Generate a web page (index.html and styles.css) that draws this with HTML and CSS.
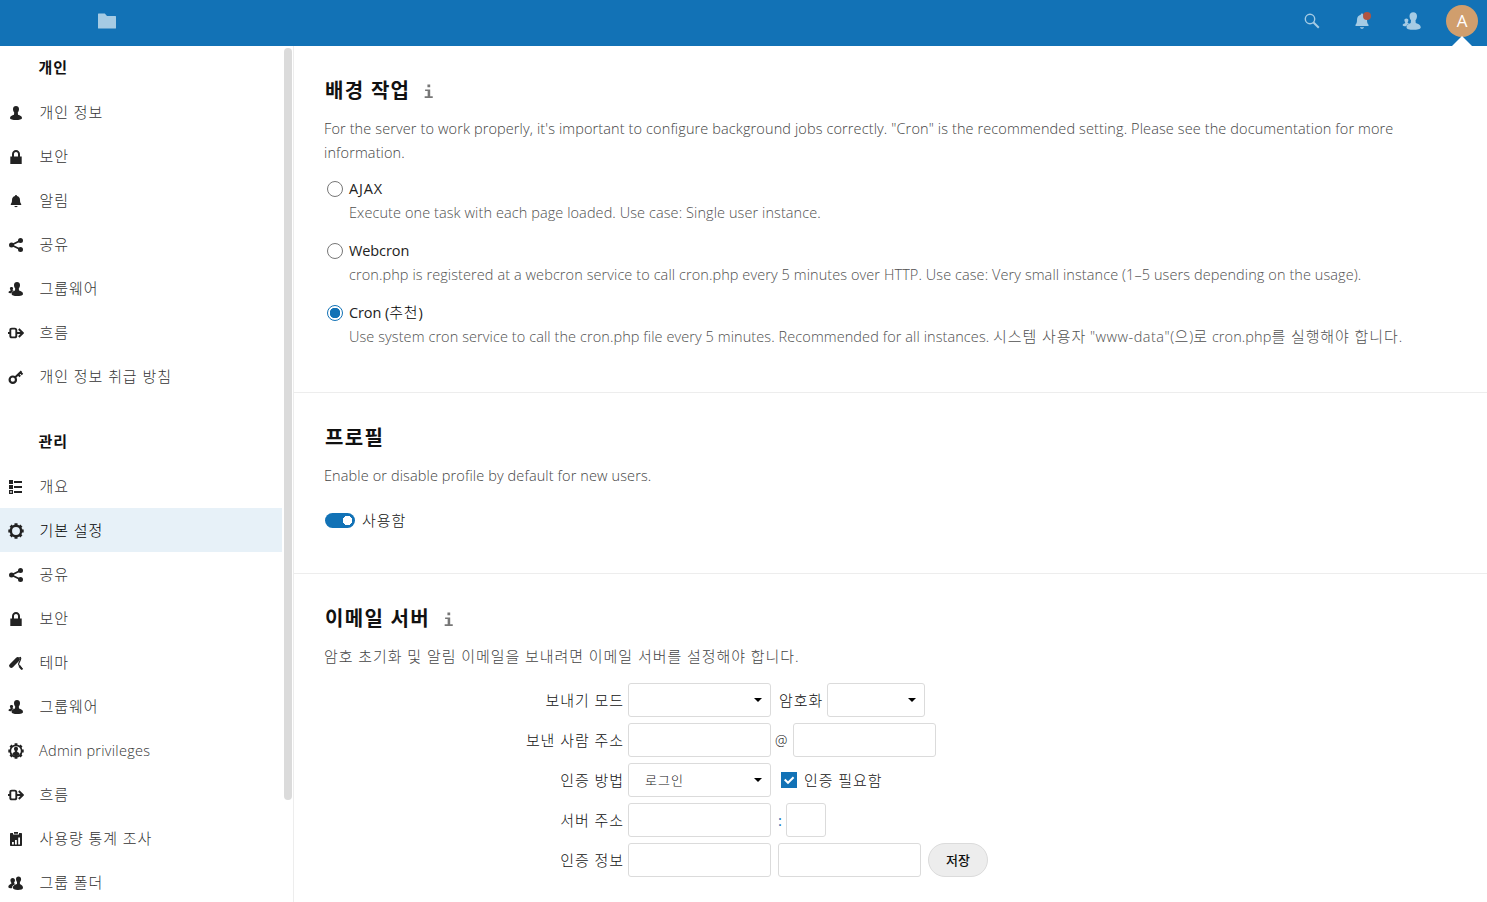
FILE: index.html
```html
<!DOCTYPE html>
<html lang="ko">
<head>
<meta charset="utf-8">
<title>기본 설정</title>
<link rel="stylesheet" href="styles.css">
</head>
<body>
<svg class="defs" width="0" height="0">
  <symbol id="user" viewBox="0 0 16 16"><path d="M8 1C6.200 1 5 2.200 5 4c0 1.500.5 2.700 1.200 3.500L6 9.800C4 10.500 2 11.200 2 13c0 1.500 3 2 6 2s6-.5 6-2c0-1.800-2-2.500-4-3.200L9.800 7.500C10.500 6.700 11 5.500 11 4c0-1.800-1.200-3-3-3z"/></symbol>
  <symbol id="lock" viewBox="0 0 16 16"><path d="M8 1C5.800 1 4 2.800 4 5v2.500H2.300V15h11.400V7.500H12V5c0-2.200-1.800-4-4-4zm0 2c1.100 0 2 .9 2 2v2.500H6V5c0-1.100.9-2 2-2z"/></symbol>
  <symbol id="bell" viewBox="0 0 16 16"><path d="M8 2C7.300 2 7 2.500 7 3 5 3.500 4 5 4 7c0 2.500-.5 3-1.200 4v1h10.400v-1C12.500 10 12 9.500 12 7c0-2-1-3.500-3-4 0-.5-.3-1-1-1zM6.300 13c.2.700.8 1.200 1.700 1.200s1.500-.5 1.700-1.200z"/></symbol>
  <symbol id="share" viewBox="0 0 16 16"><path d="M3.500 8 12.500 3.500M3.500 8l9 4.500" fill="none" stroke="currentColor" stroke-width="1.900"/><circle cx="3.500" cy="8" r="2.500"/><circle cx="12.500" cy="3.500" r="2.500"/><circle cx="12.500" cy="12.500" r="2.500"/></symbol>
  <symbol id="group" viewBox="0 0 16 16"><path d="M9 1C7.200 1 6 2.100 6 4c0 1.500.5 2.500 1.200 3.400L7 9.600C5.300 10.200 3.600 11 3.600 12.900c0 1.500 2.400 2.100 5.400 2.100s6-.5 6-2.100c0-1.800-2-2.700-4-3.300l-.2-2.200C11.500 6.500 12 5.500 12 4c0-1.900-1.200-3-3-3z"/><path d="M3.500 6C2.500 6 1.900 6.600 1.900 7.400c0 .6.200 1.100.6 1.500v.8C1.400 10 .5 10.300.5 11.200c0 .7.800.9 2.900 1 .6-1.400 1.200-1.900 2.400-2.500L4.500 9.300v-.4c.4-.4.600-.9.600-1.500C5.100 6.600 4.500 6 3.500 6z"/></symbol>
  <symbol id="groups" viewBox="0 0 16 16"><path d="M10.500 1.500C8.900 1.500 8 2.500 8 4.200c0 1.200.4 2.100 1 2.800v2C7 9.600 5 10.400 4.700 12.500c0 1.600 2.100 2.500 5.200 2.500s5.100-.8 5.100-2.200c0-1.500-1.400-2.900-3.100-3.700L11.900 7c.7-.8 1.200-1.600 1.200-2.800 0-1.700-1-2.700-2.600-2.700z"/><path d="M4.700 3C3.200 3 2.400 4 2.400 5.300c0 1 .4 1.800.9 2.400v1.100C1.800 9.400.3 10.200.3 11.900c0 .9 1.300 1.300 3.500 1.400.2-2.300 1.900-3.600 3.600-4.300L6.200 8.600l-.1-1c.5-.5.9-1.300.9-2.300C7 4 6.200 3 4.700 3z"/></symbol>
  <symbol id="flow" viewBox="0 0 16 16"><path d="M2.300 5.300c0-1.200.5-1.700 1.500-1.700h3c1 0 1.500.5 1.500 1.700v5.400c0 1.200-.5 1.700-1.500 1.700h-3c-1 0-1.500-.5-1.500-1.700zM0 8h2.300M8.300 8h6M10.800 4l4 4-4 4" fill="none" stroke="currentColor" stroke-width="1.900"/></symbol>
  <symbol id="key" viewBox="0 0 16 16"><g fill="none" stroke="currentColor"><circle cx="4.800" cy="10.700" r="3.200" stroke-width="2.200"/><path d="M7 8.500 13.500 2.300M10.200 5.500l2 2M12.500 3.500l2 2" stroke-width="2"/></g></symbol>
  <symbol id="list" viewBox="0 0 16 16"><path d="M1 1h4v4H1zM1 6h4v4H1zM6 2h8v2H6zM6 7h8v2H6zM6 12h8v2H6z"/><path d="M1.600 11.600h2.800v2.800H1.600z" fill="none" stroke="currentColor" stroke-width="1.200"/></symbol>
  <symbol id="gear" viewBox="0 0 16 16"><g fill="none" stroke="currentColor"><circle cx="8" cy="8" r="5.200" stroke-width="2.500"/><path d="M8 .3v2.200M8 13.500v2.200M.3 8h2.200M13.500 8h2.200M2.600 2.600l1.400 1.400M12 12l1.400 1.400M2.600 13.400 4 12M12 4l1.400-1.400" stroke-width="3"/></g></symbol>
  <symbol id="brush" viewBox="0 0 16 16"><path d="m3.300 10.700 6.400-6.400" fill="none" stroke="currentColor" stroke-width="4.400" stroke-linecap="round"/><path d="m10.500 3.200 2-.7c.5.700.4 1.300-.2 2.400L10.700 8.500c-.4.900 0 1.500.8 2.200l3 3.600" fill="none" stroke="currentColor" stroke-width="1.200"/><path d="m11.300 11 2.800 3.300" stroke="currentColor" stroke-width="2"/></symbol>
  <symbol id="admin" viewBox="0 0 16 16"><g fill="none" stroke="currentColor"><circle cx="8" cy="8" r="5.700" stroke-width="1.700"/><path d="M8 .3v2M8 13.700v2M.3 8h2M13.700 8h2M2.500 2.500l1.400 1.400M12.100 12.100l1.400 1.400M2.500 13.500l1.400-1.400M12.100 3.900l1.400-1.400" stroke-width="2.800"/></g><path d="M8 3.800c-1.300 0-2 .8-2 2 0 .9.300 1.500.8 2v1.300C5.500 9.600 4.500 10 4.500 11.200 5.500 12.500 6.500 13 8 13s2.500-.5 3.500-1.800c0-1.200-1-1.600-2.300-2.100V7.800c.5-.5.800-1.100.8-2 0-1.200-.7-2-2-2z"/></symbol>
  <symbol id="survey" viewBox="0 0 16 16"><path d="M3 2h2v1.500h6V2h2c.6 0 1 .4 1 1v11c0 .6-.4 1-1 1H3c-.6 0-1-.4-1-1V3c0-.6.400-1 1-1zM6 1h4v1.700H6z"/><path d="M4 11h1.800v2.500H4zM7 9h1.800v4.500H7zM10.200 6.500H12v7h-1.800z" fill="#fff"/></symbol>
  <symbol id="info" viewBox="0 0 16 16"><path d="M7 1.500h2.600v2.400H7zM4.800 6h4.800v6.500h2.400v1.600H4.400v-1.600h2.800V7.600H4.800z"/></symbol>
  <symbol id="folder" viewBox="0 0 20 20"><path d="M1.500 2.500C1.200 2.500 1 2.800 1 3.100v13.800c0 .4.200.6.600.6h16.800c.4 0 .6-.2.600-.6V5.600c0-.4-.2-.6-.6-.6H10L7.800 2.500z"/></symbol>
  <symbol id="search" viewBox="0 0 16 16"><g fill="none" stroke="currentColor"><circle cx="6" cy="6" r="4.700" stroke-width="1.400"/><path d="m9.300 9.300 5.500 5.500" stroke-width="2"/></g></symbol>
</svg>
<header class="topbar">
  <svg class="folder"><use href="#folder"/></svg>
  <div class="tools">
    <svg class="tool search"><use href="#search"/></svg>
    <div class="notify"><svg class="tool big"><use href="#bell"/></svg><i class="dot"></i></div>
    <svg class="tool contacts"><use href="#group"/></svg>
    <div class="avatar">A</div>
  </div>
</header>
<div class="layout">
  <nav class="sidebar">
    <div class="menu">
      <div class="caption">개인</div>
      <a class="item"><svg><use href="#user"/></svg>개인 정보</a>
      <a class="item"><svg><use href="#lock"/></svg>보안</a>
      <a class="item"><svg><use href="#bell"/></svg>알림</a>
      <a class="item"><svg><use href="#share"/></svg>공유</a>
      <a class="item"><svg><use href="#group"/></svg>그룹웨어</a>
      <a class="item"><svg><use href="#flow"/></svg>흐름</a>
      <a class="item"><svg><use href="#key"/></svg>개인 정보 취급 방침</a>
      <div class="caption second">관리</div>
      <a class="item"><svg><use href="#list"/></svg>개요</a>
      <a class="item active"><svg><use href="#gear"/></svg>기본 설정</a>
      <a class="item"><svg><use href="#share"/></svg>공유</a>
      <a class="item"><svg><use href="#lock"/></svg>보안</a>
      <a class="item"><svg><use href="#brush"/></svg>테마</a>
      <a class="item"><svg><use href="#group"/></svg>그룹웨어</a>
      <a class="item latin"><svg><use href="#admin"/></svg>Admin privileges</a>
      <a class="item"><svg><use href="#flow"/></svg>흐름</a>
      <a class="item"><svg><use href="#survey"/></svg>사용량 통계 조사</a>
      <a class="item"><svg><use href="#groups"/></svg>그룹 폴더</a>
    </div>
    <div class="scrollbar"></div>
  </nav>
  <main class="content">
    <section class="section jobs">
      <h2>배경 작업<svg><use href="#info"/></svg></h2>
      <p class="hint latin">For the server to work properly, it's important to configure background jobs correctly. "Cron" is the recommended setting. Please see the documentation for more<br>information.</p>
      <div class="option latin"><i class="radio"></i><div><div class="name ajax">AJAX</div><div class="note">Execute one task with each page loaded. Use case: Single user instance.</div></div></div>
      <div class="option latin"><i class="radio"></i><div><div class="name">Webcron</div><div class="note">cron.php is registered at a webcron service to call cron.php every 5 minutes over HTTP. Use case: Very small instance (1–5 users depending on the usage).</div></div></div>
      <div class="option latin"><i class="radio on"></i><div><div class="name">Cron (<span class="ko">추천</span>)</div><div class="note">Use system cron service to call the cron.php file every 5 minutes. Recommended for all instances. <span class="ko">시스템 사용자</span> <span class="account">"www-data"(</span><span class="ko">으</span>)<span class="ko">로</span> cron.php<span class="ko">를 실행해야 합니다</span>.</div></div></div>
    </section>
    <section class="section profile">
      <h2>프로필</h2>
      <p class="hint latin">Enable or disable profile by default for new users.</p>
      <div class="toggle"><i class="switch"></i><span class="text">사용함</span></div>
    </section>
    <section class="section mail">
      <h2>이메일 서버<svg><use href="#info"/></svg></h2>
      <p class="hint">암호 초기화 및 알림 이메일을 보내려면 이메일 서버를 설정해야 합니다.</p>
      <div class="form">
        <div class="row"><label class="text">보내기 모드</label><div class="field select"></div><span class="text mid">암호화</span><div class="field select enc"></div></div>
        <div class="row"><label class="text">보낸 사람 주소</label><div class="field"></div><span class="at">@</span><div class="field"></div></div>
        <div class="row"><label class="text">인증 방법</label><div class="field select">로그인</div><i class="check"><svg viewBox="0 0 16 16"><path d="m3.700 7.500 3.300 3.300 5.600-5.600"/></svg></i><span class="text">인증 필요함</span></div>
        <div class="row"><label class="text">서버 주소</label><div class="field"></div><span class="colon">:</span><div class="field port"></div></div>
        <div class="row"><label class="text">인증 정보</label><div class="field"></div><div class="field pass"></div><button class="save">저장</button></div>
      </div>
    </section>
  </main>
</div>
</body>
</html>
```
FILE: styles.css
```css
* { box-sizing: border-box; }
body {
  margin: 0;
  height: 902px;
  overflow: hidden;
  background: #fff;
  color: #222;
  font: 300 15px/24px "Open Sans", "Noto Sans CJK KR", sans-serif;
  letter-spacing: .94px;
}
svg { fill: currentColor; flex: none; }
.defs { position: absolute; }
.latin { font-size: 14.500px; letter-spacing: .085px; }
.ko { font-size: 15px; letter-spacing: .9px; line-height: 0; }
.account { letter-spacing: .5px; }

.topbar {
  height: 46px;
  background: #1272b6;
  color: #a5cbe4;
  display: flex;
  justify-content: space-between;
  padding: 0 9px 0 97px;
}
.folder { width: 20px; height: 20px; margin-top: 11px; }
.tools { display: flex; align-items: flex-start; }
.search { width: 16px; height: 16px; margin: 13px 32px 0 0; }
.notify { position: relative; width: 20px; height: 20px; margin: 11px 30px 0 0; }
.big { width: 20px; height: 20px; }
.dot { position: absolute; left: 11px; top: 1px; width: 8px; height: 8px; border-radius: 50%; background: #b15440; }
.contacts { width: 20px; height: 20px; margin: 11px 24px 0 0; }
.avatar {
  position: relative;
  width: 32px;
  height: 32px;
  margin-top: 5px;
  border-radius: 50%;
  background: #d09e6d;
  color: #fff;
  font-size: 17px;
  font-weight: 400;
  line-height: 32px;
  text-align: center;
  letter-spacing: 0;
}
.avatar::after {
  content: "";
  position: absolute;
  left: 6px;
  top: 31px;
  border: 10px solid transparent;
  border-top: 0;
  border-bottom-color: #fff;
}

.layout { display: flex; height: 858px; }
.sidebar { width: 294px; flex: none; display: flex; border-right: 1px solid #ededed; overflow: hidden; }
.menu { width: 282px; }
.scrollbar { width: 8px; height: 752px; margin: 2px 0 0 2px; border-radius: 4px; background: #dbdbdb; }
.caption { height: 44px; padding-left: 38.500px; line-height: 43px; font-weight: 700; color: #111; }
.second { margin-top: 22px; }
.item { display: flex; align-items: center; height: 44px; padding: 0 0 0 8px; color: #333; }
.item svg { width: 16px; height: 16px; margin: 1px 15.500px 0 0; color: #222; }
.item.latin { letter-spacing: .28px; padding-top: 2px; }
.item.latin svg { margin-top: 0; margin-right: 15px; }
.active { background: #e7f1f8; color: #000; }

.content { flex: 1; }
.section { padding: 30px 30px 0; border-bottom: 1px solid #ededed; }
.jobs { height: 347px; }
.profile { height: 181px; }
.mail { border: 0; }
h2 { display: flex; align-items: center; margin: 0 0 11px; height: 30px; padding-left: 1px; font-size: 20px; font-weight: 700; line-height: 30px; letter-spacing: 1.300px; color: #111; }
h2 svg { width: 17px; height: 17px; margin: 1px 0 0 10px; color: #777; }
p { margin: 0; color: #444; white-space: nowrap; }
.hint.latin { letter-spacing: .115px; }
.option { display: flex; height: 48px; margin-top: 12px; margin-bottom: 14px; }
.option + .option { margin-top: 0; }
.radio { width: 16px; height: 16px; margin: 4px 6px 0 3px; border: 1px solid #777; border-radius: 50%; flex: none; }
.radio.on { border-color: #1272b6; background: radial-gradient(circle, #1272b6 5px, #fff 5.500px); }
.name { height: 24px; font-weight: 400; letter-spacing: -.1px; color: #222; }
.name .ko { font-weight: 300; color: #000; }
.ajax { letter-spacing: .85px; }
.note { height: 24px; color: #505050; white-space: nowrap; }
.toggle { display: flex; align-items: center; gap: 7px; margin-top: 20px; }
.switch { width: 30px; height: 15px; margin-left: 1px; border-radius: 8px; background: radial-gradient(circle at 22.500px 7.500px, #fff 4.500px, #1272b6 5px); }
.text { padding-bottom: 1px; color: #111; }

.mail .hint { margin-top: -1px; }
.form { display: flex; flex-direction: column; gap: 6px; margin-top: 15px; }
.row { display: flex; align-items: center; height: 34px; color: #111; }
label { width: 300px; margin-right: 4px; text-align: right; }
.field { width: 143px; height: 34px; border: 1px solid #dbdbdb; border-radius: 3px; flex: none; }
.select { display: flex; align-items: center; justify-content: space-between; padding: 0 8px 0 16px; font-size: 13px; letter-spacing: 1px; }
.select::after { content: ""; margin-left: auto; border: 4px solid transparent; border-top: 4px solid #000; border-bottom: 0; }
.mid { width: 48px; margin-left: 8px; white-space: nowrap; }
.enc { width: 98px; }
.at { width: 22px; padding: 2px 0 0 4px; font-size: 14px; letter-spacing: 0; }
.check { width: 16px; height: 16px; margin: 0 7px 0 10px; background: #1272b6; display: flex; }
.check svg { width: 16px; height: 16px; fill: none; stroke: #fff; stroke-width: 2; }
.colon { width: 15px; padding-left: 7px; letter-spacing: 0; color: #1272b6; font-weight: 400; }
.port { width: 40px; }
.pass { margin-left: 7px; }
.save { width: 60px; height: 34px; margin-left: 7px; padding: 0; border: 1px solid #dbdbdb; border-radius: 17px; background: #ededed; color: #111; font: 500 13px/30px "Noto Sans CJK KR", sans-serif; }
```
